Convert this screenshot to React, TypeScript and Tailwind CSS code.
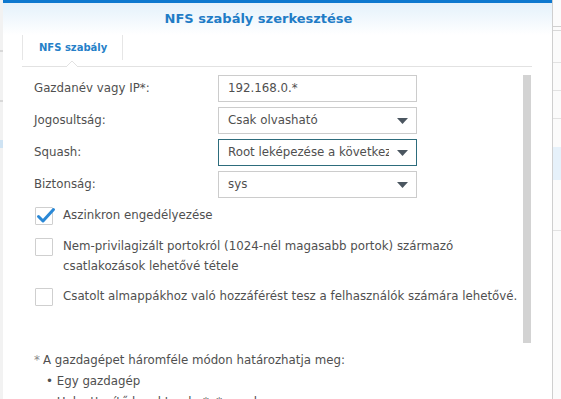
import React from 'react';

const FONT = { fontFamily: '"DejaVu Sans", Verdana, sans-serif' };

// Sorok a szabály űrlapon
const FIELDS = [
  { label: 'Gazdanév vagy IP*:', value: '192.168.0.*', select: false, focused: false },
  { label: 'Jogosultság:', value: 'Csak olvasható', select: true, focused: false },
  { label: 'Squash:', value: 'Root leképezése a következő felhasználóhoz', select: true, focused: true },
  { label: 'Biztonság:', value: 'sys', select: true, focused: false },
] as const;

const Caret = () => (
  <svg width="11" height="6" viewBox="0 0 11 6" className="shrink-0">
    <path d="M0 0 L11 0 L5.5 6 Z" fill="#4b5660" />
  </svg>
);

const Checkbox = ({ checked }: { checked?: boolean }) => (
  <div className="relative w-[18px] h-[18px] shrink-0 border border-[#cfcfcf] bg-white rounded-[1px]">
    {checked && (
      <svg width="20" height="18" viewBox="0 0 20 18" className="absolute left-[0px] top-[-1px]">
        <path d="M2.5 9.5 L7 14 L17.5 2.5" fill="none" stroke="#2a88d6" strokeWidth="3" strokeLinecap="round" strokeLinejoin="round" />
      </svg>
    )}
  </div>
);

const FormRow = ({ label, value, select, focused }: (typeof FIELDS)[number]) => (
  <div className="flex items-center h-[27px]">
    <div className="w-[184px] text-[#4f4f4f]">{label}</div>
    <div
      className={`w-[199px] h-[27px] flex items-center gap-[8px] pl-[9px] pr-[8px] bg-white border ${
        focused ? 'border-[#2d6c7c]' : 'border-[#cccccc]'
      }`}
    >
      <span className="flex-1 min-w-0 whitespace-nowrap overflow-hidden text-[#4f4f4f]">{value}</span>
      {select && <Caret />}
    </div>
  </div>
);

export default function App() {
  return (
    <div className="w-[561px] h-[399px] overflow-hidden flex bg-white text-[11.8px]" style={FONT}>
      {/* háttér bal oldalt */}
      <div className="w-[3px] shrink-0 bg-[#f2f2f2] flex flex-col">
        <div className="h-[50px] shrink-0" />
        <div className="h-[2px] shrink-0 bg-[#d8d8d8]" />
        <div className="h-[48px] shrink-0" />
        <div className="h-[2px] shrink-0 bg-[#d8d8d8]" />
        <div className="h-[38px] shrink-0" />
        <div className="h-[8px] shrink-0 bg-[#cfe3f3]" />
      </div>

      {/* dialógus */}
      <div className="w-[550px] h-[399px] overflow-hidden shrink-0 flex flex-col border-r border-[#cfcfcf]">
        <div className="h-[3px] shrink-0 bg-[#0d78cf]" />
        <div className="h-[32px] shrink-0 bg-gradient-to-b from-[#e4f1fb] to-white flex items-center justify-center pr-[38px]">
          <span className="text-[13px] font-bold text-[#1f7cc6]">NFS szabály szerkesztése</span>
        </div>

        {/* fül */}
        <div className="shrink-0 pl-[19px] pr-[20px]">
          <div className="relative h-[32px] border-b border-[#e2e2e2]">
            <div className="w-[101px] h-[25px] border-x border-[#e6e6e6] flex items-center pl-[16px] text-[10px] font-bold text-[#2580c8]">
              NFS szabály
            </div>
            <svg width="12" height="6" viewBox="0 0 12 6" className="absolute left-[44px] bottom-[-1px]">
              <path d="M0 6 L6 0 L12 6" fill="white" stroke="#e2e2e2" strokeWidth="1" />
            </svg>
          </div>
        </div>

        {/* tartalom */}
        <div className="shrink-0 flex pl-[19px] pr-[20px] pt-[8px]">
          <div className="flex-1 pl-[12px]">
            <div className="flex flex-col gap-[5px]">
              {FIELDS.map((f) => (
                <FormRow key={f.label} {...f} />
              ))}
            </div>

            <div className="mt-[8px] flex flex-col text-[#4f4f4f]">
              <div className="flex items-center gap-[10px] h-[20px] pl-[1px]">
                <Checkbox checked />
                <span>Aszinkron engedélyezése</span>
              </div>
              <div className="flex gap-[10px] mt-[11px] pl-[1px]">
                <div className="pt-[1px]">
                  <Checkbox />
                </div>
                <div className="leading-[20px] -mt-[1px]">
                  Nem-privilagizált portokról (1024-nél magasabb portok) származó
                  <br />
                  csatlakozások lehetővé tétele
                </div>
              </div>
              <div className="flex items-center gap-[10px] h-[20px] mt-[11px] pl-[1px]">
                <Checkbox />
                <span className="whitespace-nowrap">
                  Csatolt almappákhoz való hozzáférést tesz a felhasználók számára lehetővé.
                </span>
              </div>
            </div>

            <div className="mt-[43px] text-[#4f4f4f] leading-[21px]">
              <div>
                <span className="text-[#8a8a8a] mr-[3px]">*</span>A gazdagépet háromféle módon határozhatja meg:
              </div>
              <div className="pl-[12px]">• Egy gazdagép</div>
              <div className="pl-[12px]">• Helyettesítő karakterek: *, *.synology.com</div>
            </div>
          </div>
          {/* görgetősáv */}
          <div className="w-[8px] h-[268px] bg-[#d3d3d3] shrink-0 mr-[1px]" />
        </div>
      </div>

      {/* háttér jobb oldalt */}
      <div className="flex-1 bg-[#fbfbfb] flex flex-col">
        <div className="h-[26px] shrink-0" />
        <div className="h-[1px] shrink-0 bg-[#d0d0d0]" />
        <div className="h-[3px] shrink-0" />
        <div className="h-[1px] shrink-0 bg-[#d8d8d8]" />
        <div className="h-[31px] shrink-0" />
        <div className="h-[1px] shrink-0 bg-[#e2e2e2]" />
        <div className="h-[27px] shrink-0" />
        <div className="h-[1px] shrink-0 bg-[#e2e2e2]" />
        <div className="h-[27px] shrink-0" />
        <div className="h-[1px] shrink-0 bg-[#e2e2e2]" />
        <div className="h-[28px] shrink-0" />
        <div className="h-[33px] shrink-0 bg-[#e6f1fa]" />
        <div className="h-[50px] shrink-0" />
        <div className="h-[1px] shrink-0 bg-[#e2e2e2]" />
      </div>
    </div>
  );
}
